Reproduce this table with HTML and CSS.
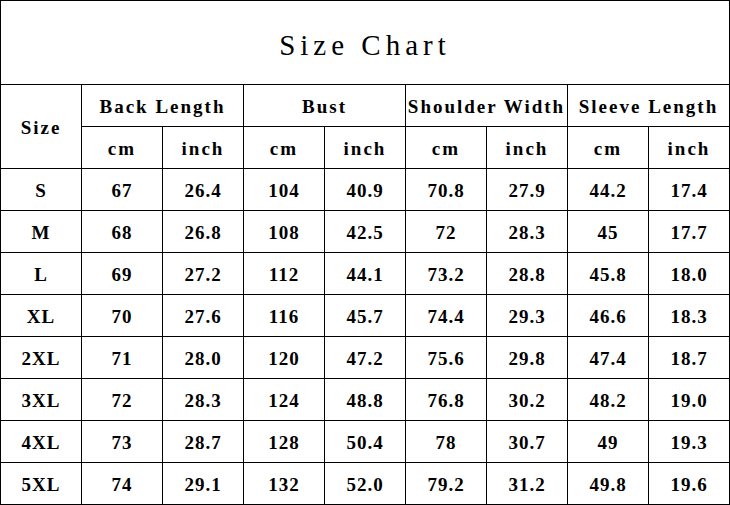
FILE: index.html
```html
<!DOCTYPE html>
<html>
<head>
<meta charset="utf-8">
<link rel="stylesheet" href="styles.css">
</head>
<body>
<div class="chart">
  <div class="cell title">Size Chart</div>
  <div class="cell head size-head">Size</div>
  <div class="cell head group">Back Length</div>
  <div class="cell head group">Bust</div>
  <div class="cell head group">Shoulder Width</div>
  <div class="cell head group">Sleeve Length</div>
  <div class="cell head">cm</div><div class="cell head">inch</div>
  <div class="cell head">cm</div><div class="cell head">inch</div>
  <div class="cell head">cm</div><div class="cell head">inch</div>
  <div class="cell head">cm</div><div class="cell head">inch</div>

  <div class="cell">S</div><div class="cell">67</div><div class="cell">26.4</div><div class="cell">104</div><div class="cell">40.9</div><div class="cell">70.8</div><div class="cell">27.9</div><div class="cell">44.2</div><div class="cell">17.4</div>
  <div class="cell">M</div><div class="cell">68</div><div class="cell">26.8</div><div class="cell">108</div><div class="cell">42.5</div><div class="cell">72</div><div class="cell">28.3</div><div class="cell">45</div><div class="cell">17.7</div>
  <div class="cell">L</div><div class="cell">69</div><div class="cell">27.2</div><div class="cell">112</div><div class="cell">44.1</div><div class="cell">73.2</div><div class="cell">28.8</div><div class="cell">45.8</div><div class="cell">18.0</div>
  <div class="cell">XL</div><div class="cell">70</div><div class="cell">27.6</div><div class="cell">116</div><div class="cell">45.7</div><div class="cell">74.4</div><div class="cell">29.3</div><div class="cell">46.6</div><div class="cell">18.3</div>
  <div class="cell">2XL</div><div class="cell">71</div><div class="cell">28.0</div><div class="cell">120</div><div class="cell">47.2</div><div class="cell">75.6</div><div class="cell">29.8</div><div class="cell">47.4</div><div class="cell">18.7</div>
  <div class="cell">3XL</div><div class="cell">72</div><div class="cell">28.3</div><div class="cell">124</div><div class="cell">48.8</div><div class="cell">76.8</div><div class="cell">30.2</div><div class="cell">48.2</div><div class="cell">19.0</div>
  <div class="cell">4XL</div><div class="cell">73</div><div class="cell">28.7</div><div class="cell">128</div><div class="cell">50.4</div><div class="cell">78</div><div class="cell">30.7</div><div class="cell">49</div><div class="cell">19.3</div>
  <div class="cell">5XL</div><div class="cell">74</div><div class="cell">29.1</div><div class="cell">132</div><div class="cell">52.0</div><div class="cell">79.2</div><div class="cell">31.2</div><div class="cell">49.8</div><div class="cell">19.6</div>
</div>
</body>
</html>
```
FILE: styles.css
```css
html, body {
  margin: 0;
  padding: 0;
  background: #fff;
}

.chart {
  display: grid;
  grid-template-columns: repeat(9, 80px);
  grid-template-rows: 83px repeat(10, 41px);
  gap: 1px;
  padding: 1px;
  background: #000;
  width: 730px;
  box-sizing: border-box;
  font-family: "Liberation Serif", "DejaVu Serif", serif;
  color: #000;
}

.cell {
  background: #fff;
  display: flex;
  align-items: center;
  justify-content: center;
  font-size: 19px;
  font-weight: bold;
  letter-spacing: 1px;
  white-space: nowrap;
  padding-top: 2px;
  box-sizing: border-box;
}

.head {
  letter-spacing: 2px;
  padding-top: 3px;
}

.title {
  grid-column: 1 / span 9;
  font-size: 29px;
  font-weight: normal;
  letter-spacing: 5px;
  padding-top: 6px;
}

.size-head {
  grid-row: span 2;
}

.group {
  grid-column: span 2;
}
```
